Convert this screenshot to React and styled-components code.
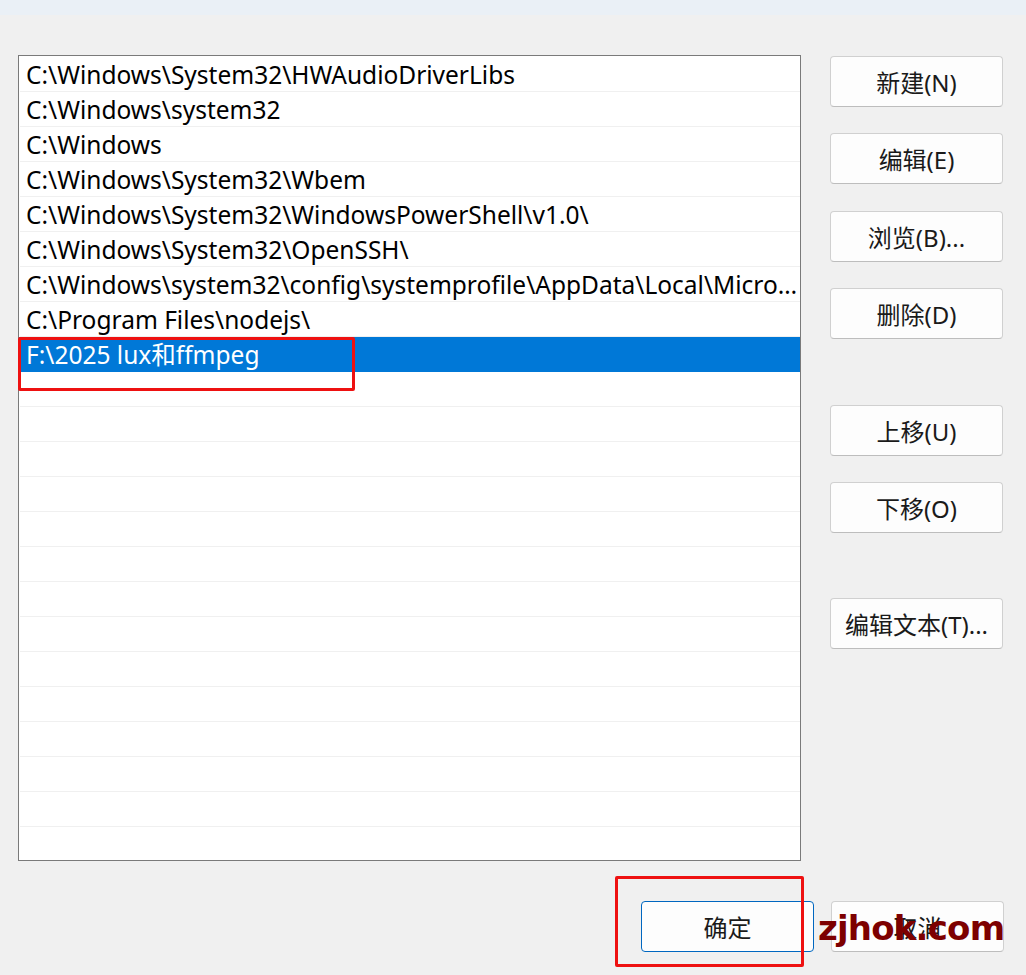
import React from "react";
import styled, { createGlobalStyle } from "styled-components";

const GlobalStyle = createGlobalStyle`
  html, body {
    margin: 0;
    padding: 0;
    background: #f0f0f0;
  }
  body {
    font-family: "Noto Sans", "Noto Sans CJK SC", sans-serif;
  }
`;

const Page = styled.div`
  position: relative;
  width: 1026px;
  height: 975px;
  background: #f0f0f0;
  overflow: hidden;
`;

const TopBand = styled.div`
  height: 15px;
  background: #eaf0f6;
`;

const Main = styled.div`
  display: flex;
  padding: 40px 0 0 18px;
`;

const ListBox = styled.div`
  width: 781px;
  height: 803px;
  border: 1px solid #7a7a7a;
  background: #ffffff;
  padding-top: 1px;
  overflow: hidden;
`;

const Row = styled.div`
  box-sizing: border-box;
  height: 35px;
  margin-left: ${(p) => (p.selected ? "0" : "1px")};
  border-bottom: 1px solid ${(p) => (p.selected ? "#0078d7" : "#f0f0f0")};
  background: ${(p) => (p.selected ? "#0078d7" : "#ffffff")};
  color: ${(p) => (p.selected ? "#ffffff" : "#000000")};
  font-size: 24.5px;
  line-height: 32px;
  padding: 2px 2px 0 ${(p) => (p.selected ? "7px" : "6px")};
  white-space: nowrap;
  overflow: hidden;
  text-overflow: ellipsis;
`;

const Side = styled.div`
  display: flex;
  flex-direction: column;
  margin-left: 29px;
  padding-top: 1px;
`;

const Button = styled.button`
  width: 173px;
  height: 51px;
  margin-top: ${(p) => p.gap || 0}px;
  border: 1px solid ${(p) => (p.primary ? "#0067c0" : "#d0d0d0")};
  border-bottom-color: ${(p) => (p.primary ? "#0067c0" : "#bdbdbd")};
  border-radius: 4px;
  background: #fdfdfd;
  color: #1a1a1a;
  font-family: "Noto Sans", "Noto Sans CJK SC", sans-serif;
  font-size: 24px;
  padding: 0;
  white-space: nowrap;
  cursor: default;
`;

const Footer = styled.div`
  display: flex;
  justify-content: flex-end;
  gap: 17px;
  padding: 40px 22px 0 0;
`;

const Mark = styled.div`
  position: absolute;
  left: ${(p) => p.x}px;
  top: ${(p) => p.y}px;
  width: ${(p) => p.w}px;
  height: ${(p) => p.h}px;
  border: 3px solid #ee1111;
  border-radius: 2px;
  box-sizing: border-box;
  pointer-events: none;
`;

const Watermark = styled.div`
  position: absolute;
  left: 818px;
  top: 908px;
  font-family: "DejaVu Sans", "Liberation Sans", sans-serif;
  font-weight: bold;
  font-size: 34px;
  letter-spacing: -0.8px;
  color: #7d0000;
  pointer-events: none;
`;

const paths = [
  "C:\\Windows\\System32\\HWAudioDriverLibs",
  "C:\\Windows\\system32",
  "C:\\Windows",
  "C:\\Windows\\System32\\Wbem",
  "C:\\Windows\\System32\\WindowsPowerShell\\v1.0\\",
  "C:\\Windows\\System32\\OpenSSH\\",
  "C:\\Windows\\system32\\config\\systemprofile\\AppData\\Local\\Microsoft\\WindowsApps",
  "C:\\Program Files\\nodejs\\",
  "F:\\2025 lux和ffmpeg",
];

const buttons = [
  { label: "新建(N)", gap: 0 },
  { label: "编辑(E)", gap: 26 },
  { label: "浏览(B)...", gap: 27 },
  { label: "删除(D)", gap: 26 },
  { label: "上移(U)", gap: 66 },
  { label: "下移(O)", gap: 26 },
  { label: "编辑文本(T)...", gap: 65 },
];

export default function App() {
  const rows = [];
  for (let i = 0; i < 23; i++) rows.push(paths[i] || "");

  return (
    <Page>
      <GlobalStyle />
      <TopBand />
      <Main>
        <ListBox>
          {rows.map((r, i) => (
            <Row key={i} selected={i === 8}>
              {r}
            </Row>
          ))}
        </ListBox>
        <Side>
          {buttons.map((b) => (
            <Button key={b.label} gap={b.gap}>
              {b.label}
            </Button>
          ))}
        </Side>
      </Main>
      <Footer>
        <Button primary>确定</Button>
        <Button>取消</Button>
      </Footer>
      <Mark x={18} y={337} w={337} h={54} />
      <Mark x={615} y={876} w={189} h={91} />
      <Watermark>zjhok.com</Watermark>
    </Page>
  );
}
